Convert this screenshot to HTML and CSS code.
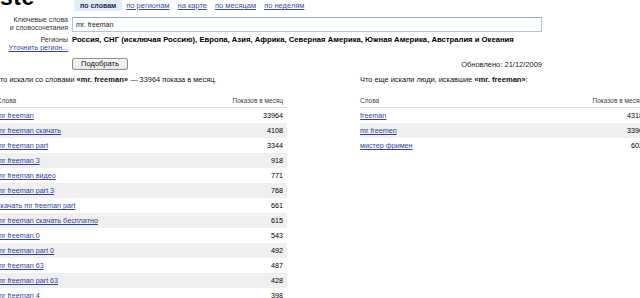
FILE: index.html
```html
<!DOCTYPE html>
<html lang="ru">
<head>
<meta charset="utf-8">
<title>Подбор слов</title>
<link rel="stylesheet" href="styles.css">
</head>
<body>
<div class="page">
  <div class="top">
    <div class="logo">ste</div>
    <nav class="tabs">
      <span class="tab active">по словам</span>
      <a class="tab" href="#">по регионам</a>
      <a class="tab" href="#">на карте</a>
      <a class="tab" href="#">по месяцам</a>
      <a class="tab" href="#">по неделям</a>
    </nav>
  </div>

  <div class="form">
    <div class="label two">Ключевые слова<br>и словосочетания</div>
    <div class="field"><div class="input">mr. freeman</div></div>

    <div class="label">Регионы</div>
    <div class="regions">Россия, СНГ (исключая Россию), Европа, Азия, Африка, Северная Америка, Южная Америка, Австралия и Океания</div>

    <div class="label"><a href="#">Уточнить регион...</a></div>
    <div></div>

    <div></div>
    <div class="actions">
      <button class="btn" type="button">Подобрать</button>
      <span class="updated">Обновлено: 21/12/2009</span>
    </div>
  </div>

  <div class="results">
    <section class="col left">
      <p class="head">Что искали со словами <b>«mr. freeman»</b> — 33964 показа в месяц.</p>
      <table class="tbl">
        <thead><tr><th class="w">Слова</th><th class="n">Показов в месяц</th></tr></thead>
        <tbody>
          <tr><td><a href="#">mr freeman</a></td><td class="n">33964</td></tr>
          <tr><td><a href="#">mr freeman скачать</a></td><td class="n">4108</td></tr>
          <tr><td><a href="#">mr freeman part</a></td><td class="n">3344</td></tr>
          <tr><td><a href="#">mr freeman 3</a></td><td class="n">918</td></tr>
          <tr><td><a href="#">mr freeman видео</a></td><td class="n">771</td></tr>
          <tr><td><a href="#">mr freeman part 3</a></td><td class="n">768</td></tr>
          <tr><td><a href="#">скачать mr freeman part</a></td><td class="n">661</td></tr>
          <tr><td><a href="#">mr freeman скачать бесплатно</a></td><td class="n">615</td></tr>
          <tr><td><a href="#">mr freeman 0</a></td><td class="n">543</td></tr>
          <tr><td><a href="#">mr freeman part 0</a></td><td class="n">492</td></tr>
          <tr><td><a href="#">mr freeman 63</a></td><td class="n">487</td></tr>
          <tr><td><a href="#">mr freeman part 63</a></td><td class="n">428</td></tr>
          <tr><td><a href="#">mr freeman 4</a></td><td class="n">398</td></tr>
        </tbody>
      </table>
    </section>
    <section class="col right">
      <p class="head">Что еще искали люди, искавшие <b>«mr. freeman»</b>:</p>
      <table class="tbl">
        <thead><tr><th class="w">Слова</th><th class="n">Показов в месяц</th></tr></thead>
        <tbody>
          <tr><td><a href="#">freeman</a></td><td class="n">4318</td></tr>
          <tr><td><a href="#">mr freemen</a></td><td class="n">3396</td></tr>
          <tr><td><a href="#">мистер фримен</a></td><td class="n">602</td></tr>
        </tbody>
      </table>
    </section>
  </div>
</div>
</body>
</html>
```

FILE: styles.css
```css
html, body {
  margin: 0;
  padding: 0;
  background: #fff;
  overflow: hidden;
}
body {
  font-family: "Liberation Sans", Arial, sans-serif;
  font-size: 7px;
  color: #000;
}
a { color: #2f44a6; text-decoration: underline; }

.page {
  width: 660px;
  height: 298px;
}

.top {
  display: flex;
  align-items: flex-start;
  height: 12px;
}
.logo {
  width: 74px;
  font-size: 23px;
  font-weight: bold;
  line-height: 22px;
  margin-top: -14px;
  letter-spacing: 0.5px;
  height: 22px;
}
.tabs {
  display: flex;
  align-items: center;
  height: 11px;
  font-size: 7.5px;
}
.tab {
  margin-right: 8px;
  line-height: 11px;
  color: #3b4fb0;
}
.tab.active {
  background: #e3ebf6;
  color: #1c2a55;
  font-weight: bold;
  font-size: 7px;
  padding: 0 6px;
  margin-right: 4px;
  height: 11px;
}

.form {
  display: grid;
  grid-template-columns: 68px 470px;
  column-gap: 4px;
  margin-top: 4px;
}
.label {
  text-align: right;
  color: #333;
  line-height: 8px;
}
.field { padding-top: 1px; }
.input {
  height: 13px;
  border: 1px solid #b6c3d3;
  border-top-color: #9aa8bb;
  line-height: 13px;
  padding-left: 3px;
  color: #222;
}
.regions {
  font-weight: bold;
  font-size: 7.7px;
  line-height: 8px;
  margin-top: 4px;
}
.form > .label:nth-child(3) { margin-top: 4px; }

.actions {
  display: flex;
  justify-content: space-between;
  align-items: center;
  margin-top: 6px;
}
.btn {
  font-family: inherit;
  font-size: 7.5px;
  width: 56px;
  height: 12px;
  padding: 0;
  border: 1px solid #8f8f8f;
  border-radius: 2px;
  background: linear-gradient(#fbfbfb, #e6e6e6);
  color: #111;
  line-height: 10px;
}
.updated {
  color: #222;
  font-size: 7.5px;
}

.results {
  display: flex;
  margin-left: -3px;
  margin-top: 5px;
}
.col.left { width: 290px; }
.col.right { width: 287px; margin-left: 73px; }
.head {
  margin: 0;
  line-height: 10px;
  font-size: 7.4px;
  color: #111;
}
.col.left .head { margin-left: -2px; }
.head b { font-size: 7.6px; }

.tbl {
  width: 100%;
  border-collapse: collapse;
  margin-top: 10px;
}
.tbl th {
  font-weight: normal;
  font-size: 6.5px;
  color: #444;
  text-align: left;
  height: 11px;
  padding: 0 0 1px 0;
  border-bottom: 1px solid #dedede;
  vertical-align: middle;
  line-height: 11px;
}
.tbl th.n, .tbl td.n {
  text-align: right;
  padding-right: 4px;
}
.tbl td {
  height: 15px;
  padding: 0;
  line-height: 15px;
  font-size: 7.2px;
}
.tbl tbody tr:nth-child(even) td { background: #efefef; }
```
